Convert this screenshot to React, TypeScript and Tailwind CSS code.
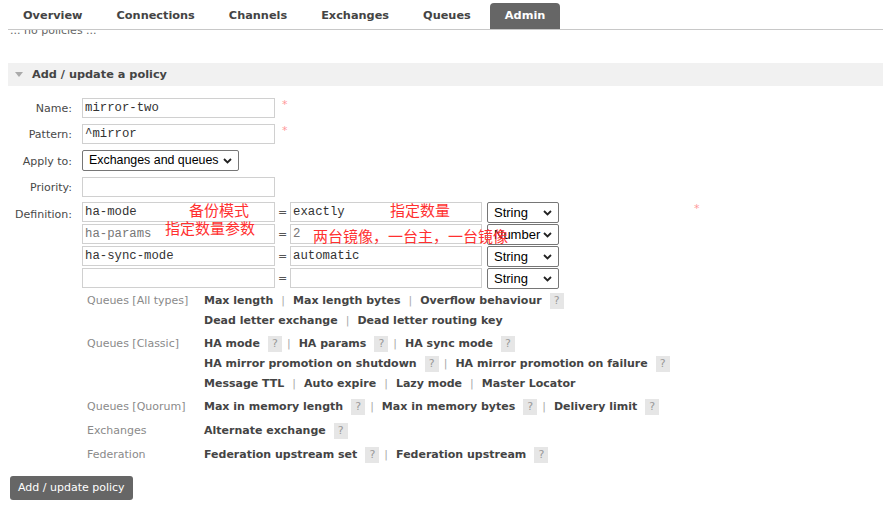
import React from "react";

const Chevron = () => (
  <svg width="9" height="6" viewBox="0 0 9 6" className="shrink-0">
    <path d="M1 1l3.5 3.5L8 1" fill="none" stroke="#222" strokeWidth="1.8" />
  </svg>
);

const Select = ({ text, w, h = 21, size = "text-[13px]" }: { text: string; w: string; h?: number; size?: string }) => (
  <div
    className={`${w} ${size} flex items-center justify-between whitespace-nowrap border border-[#767676] rounded-[2px] bg-white pl-[6px] pr-[6px] font-['Liberation_Sans',sans-serif] text-black`}
    style={{ height: h }}
  >
    <span>{text}</span>
    <Chevron />
  </div>
);

const Input = ({ value, w = "w-[193px]", light = false }: { value: string; w?: string; light?: boolean }) => (
  <input
    readOnly
    value={value}
    className={`${w} h-[20px] border border-[#d0d0d0] bg-white px-[2px] font-['Liberation_Mono',monospace] text-[12.3px] outline-none ${light ? "text-[#777]" : "text-[#333]"}`}
  />
);

const Star = () => <span className="ml-[7px] self-start mt-[1px] text-[11px] leading-[12px] text-[#f99]">*</span>;

type Item = { t: string; q?: boolean };

const Line = ({ items }: { items: Item[] }) => (
  <div className="flex items-center h-[20px] whitespace-nowrap">
    {items.map((it, i) => (
      <React.Fragment key={i}>
        {i > 0 && (
          <span className={`${items[i - 1].q ? "ml-[5px]" : "ml-[8px]"} mr-[8px] font-normal text-[#aaaaaa]`}>|</span>
        )}
        <span className="font-bold text-[#444]">{it.t}</span>
        {it.q && (
          <span className="ml-[8px] w-[14px] h-[16px] flex items-center justify-center bg-[#e6e6e6] text-[#999] font-normal text-[11px]">
            ?
          </span>
        )}
      </React.Fragment>
    ))}
  </div>
);

const Group = ({ label, lines, cls = "" }: { label: string; lines: Item[][]; cls?: string }) => (
  <div className={`flex ${cls}`}>
    <div className="w-[117px] h-[20px] flex items-center text-[#8a8a8a] text-[11px]">{label}</div>
    <div className="flex flex-col">
      {lines.map((l, i) => (
        <Line key={i} items={l} />
      ))}
    </div>
  </div>
);

export default function App() {
  const tabs = ["Overview", "Connections", "Channels", "Exchanges", "Queues", "Admin"];
  return (
    <div className="relative w-[883px] h-[508px] overflow-hidden bg-white font-['DejaVu_Sans',sans-serif] text-[11px] text-[#484848]">
      {/* top nav */}
      <div className="absolute top-0 left-0 right-0 h-[30px] bg-white z-10">
        <div className="flex items-end h-[29px] pl-[6px]">
          {tabs.map((t) => (
            <div
              key={t}
              className={`h-[26px] flex items-center px-[15px] mx-[2px] font-bold text-[11.3px] rounded-t-[4px] ${
                t === "Admin" ? "bg-[#666] text-white" : "text-[#444]"
              }`}
            >
              {t}
            </div>
          ))}
        </div>
        <div className="ml-[8px] h-[1px] bg-[#c8c8c8]" />
      </div>

      {/* content */}
      <div className="pt-[24px]">
        <p className="pl-[10px] leading-[14px] text-[#666]">... no policies ...</p>

        <div className="mt-[25px] ml-[8px] h-[23px] bg-[#f1f1f1] flex items-center">
          <div className="ml-[7px] w-0 h-0 border-l-[4px] border-r-[4px] border-t-[5px] border-l-transparent border-r-transparent border-t-[#aaa]" />
          <span className="ml-[9px] mt-[1px] font-bold text-[11.3px] text-[#444]">Add / update a policy</span>
        </div>

        <div className="mt-[12px] pl-[8px] flex flex-col">
          <div className="flex items-center h-[20px]">
            <div className="w-[64px] mr-[10px] text-right pt-[3px]">Name:</div>
            <Input value="mirror-two" />
            <Star />
          </div>
          <div className="flex items-center h-[20px] mt-[6px]">
            <div className="w-[64px] mr-[10px] text-right pt-[3px]">Pattern:</div>
            <Input value="^mirror" />
            <Star />
          </div>
          <div className="flex items-center h-[21px] mt-[6px]">
            <div className="w-[64px] mr-[10px] text-right pt-[3px]">Apply to:</div>
            <Select text="Exchanges and queues" w="w-[157px]" size="text-[12.4px]" />
          </div>
          <div className="flex items-center h-[20px] mt-[6px]">
            <div className="w-[64px] mr-[10px] text-right pt-[3px]">Priority:</div>
            <Input value="" />
          </div>
          <div className="flex mt-[5px]">
            <div className="w-[64px] mr-[10px] text-right pt-[5px]">Definition:</div>
            <div className="flex flex-col">
              {[
                { k: "ha-mode", v: "exactly", s: "String" },
                { k: "ha-params", v: "2", s: "Number", light: true },
                { k: "ha-sync-mode", v: "automatic", s: "String" },
                { k: "", v: "", s: "String" },
              ].map((r, i) => (
                <div key={i} className="flex h-[22px]">
                  <Input value={r.k} light={r.light} />
                  <span className="w-[15px] text-center pt-[3px] text-[#555]">=</span>
                  <Input value={r.v} w="w-[192px]" light={r.light} />
                  <div className="ml-[5px]">
                    <Select text={r.s} w="w-[72px]" />
                  </div>
                  {i === 0 && <span className="ml-[135px] mt-[1px] text-[11px] leading-[12px] text-[#f99]">*</span>}
                </div>
              ))}
            </div>
          </div>
        </div>

        <div className="ml-[87px] mt-[1px]">
          <Group
            label="Queues [All types]"
            lines={[
              [{ t: "Max length" }, { t: "Max length bytes" }, { t: "Overflow behaviour", q: true }],
              [{ t: "Dead letter exchange" }, { t: "Dead letter routing key" }],
            ]}
          />
          <Group
            cls="mt-[3px]"
            label="Queues [Classic]"
            lines={[
              [{ t: "HA mode", q: true }, { t: "HA params", q: true }, { t: "HA sync mode", q: true }],
              [{ t: "HA mirror promotion on shutdown", q: true }, { t: "HA mirror promotion on failure", q: true }],
              [{ t: "Message TTL" }, { t: "Auto expire" }, { t: "Lazy mode" }, { t: "Master Locator" }],
            ]}
          />
          <Group
            cls="mt-[3px]"
            label="Queues [Quorum]"
            lines={[[{ t: "Max in memory length", q: true }, { t: "Max in memory bytes", q: true }, { t: "Delivery limit", q: true }]]}
          />
          <Group cls="mt-[4px]" label="Exchanges" lines={[[{ t: "Alternate exchange", q: true }]]} />
          <Group
            cls="mt-[4px]"
            label="Federation"
            lines={[[{ t: "Federation upstream set", q: true }, { t: "Federation upstream", q: true }]]}
          />
        </div>

        <div className="mt-[11px] ml-[10px]">
          <button className="h-[24px] px-[8px] bg-[#666] text-white rounded-[3px] text-[11px]">Add / update policy</button>
        </div>
      </div>

      {/* annotations */}
      <div className="absolute inset-0 pointer-events-none font-['Noto_Sans_CJK_SC',sans-serif] text-[15px] leading-[15px] text-[#ff3030]">
        <span className="absolute left-[189px] top-[202px]">备份模式</span>
        <span className="absolute left-[165px] top-[220px]">指定数量参数</span>
        <span className="absolute left-[390px] top-[202px]">指定数量</span>
        <span className="absolute left-[313px] top-[228px]">两台镜像，一台主，一台镜像</span>
      </div>
    </div>
  );
}
